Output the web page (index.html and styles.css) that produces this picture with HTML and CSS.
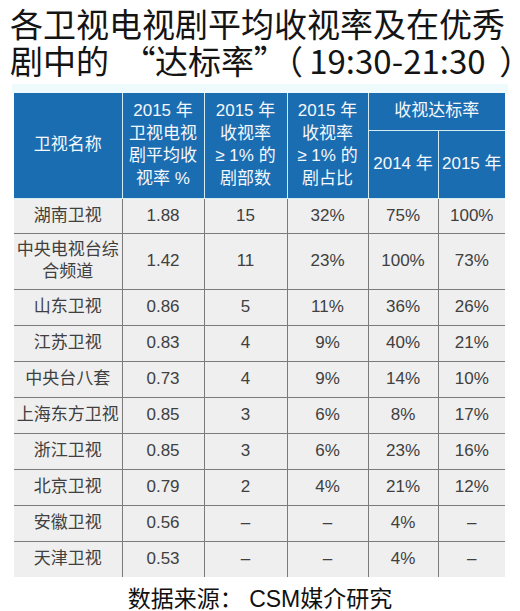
FILE: index.html
```html
<!DOCTYPE html>
<html lang="zh-CN">
<head>
    <meta charset="UTF-8">
    <meta name="viewport" content="width=device-width, initial-scale=1.0">
    <title>各卫视电视剧平均收视率及在优秀剧中的达标率</title>
    <link rel="stylesheet" href="styles.css">
</head>
<body>
    <h1 class="title">各卫视电视剧平均收视率及在优秀
剧中的    “达标率”  （ 19:30-21:30  ）</h1>

    <div class="band"></div>

    <table class="rates">
        <colgroup>
            <col class="c-name">
            <col class="c-avg">
            <col class="c-count">
            <col class="c-share">
            <col class="c-y14">
            <col class="c-y15">
        </colgroup>
        <thead>
            <tr class="head-top">
                <th rowspan="2">卫视名称</th>
                <th rowspan="2">2015 年<br>卫视电视<br>剧平均收<br>视率 %</th>
                <th rowspan="2">2015 年<br>收视率<br>≥ 1% 的<br>剧部数</th>
                <th rowspan="2">2015 年<br>收视率<br>≥ 1% 的<br>剧占比</th>
                <th colspan="2">收视达标率</th>
            </tr>
            <tr class="head-sub">
                <th>2014 年</th>
                <th>2015 年</th>
            </tr>
        </thead>
        <tbody>
            <tr class="first"><td>湖南卫视</td><td>1.88</td><td>15</td><td>32%</td><td>75%</td><td>100%</td></tr>
            <tr class="tall"><td>中央电视台综<br>合频道</td><td>1.42</td><td>11</td><td>23%</td><td>100%</td><td>73%</td></tr>
            <tr><td>山东卫视</td><td>0.86</td><td>5</td><td>11%</td><td>36%</td><td>26%</td></tr>
            <tr><td>江苏卫视</td><td>0.83</td><td>4</td><td>9%</td><td>40%</td><td>21%</td></tr>
            <tr><td>中央台八套</td><td>0.73</td><td>4</td><td>9%</td><td>14%</td><td>10%</td></tr>
            <tr><td>上海东方卫视</td><td>0.85</td><td>3</td><td>6%</td><td>8%</td><td>17%</td></tr>
            <tr><td>浙江卫视</td><td>0.85</td><td>3</td><td>6%</td><td>23%</td><td>16%</td></tr>
            <tr><td>北京卫视</td><td>0.79</td><td>2</td><td>4%</td><td>21%</td><td>12%</td></tr>
            <tr><td>安徽卫视</td><td>0.56</td><td>–</td><td>–</td><td>4%</td><td>–</td></tr>
            <tr><td>天津卫视</td><td>0.53</td><td>–</td><td>–</td><td>4%</td><td>–</td></tr>
        </tbody>
    </table>

    <p class="source">数据来源： CSM媒介研究</p>
</body>
</html>
```

FILE: styles.css
```css
body {
    margin: 0;
    background: #ffffff;
    font-family: "Liberation Sans", "Noto Sans CJK SC", sans-serif;
    color: #111;
}

/* two fixed lines, punctuation spaced like the poster */
.title {
    margin: 0;
    padding: 5px 0 0 10px;
    font-family: "Noto Sans CJK SC", sans-serif;
    font-size: 33px;
    font-weight: 400;
    line-height: 37px;
    color: #141414;
    white-space: pre;
    font-feature-settings: "palt";
}

.band {
    height: 9px;
    margin: 5px 12px 0 12px;
    background: #effafc;
}

.rates {
    width: 491px;
    margin-left: 14px;
    border-collapse: collapse;
    table-layout: fixed;
    font-size: 17px;
    text-align: center;
}

.c-name { width: 108px; }
.c-avg { width: 82px; }
.c-count { width: 83px; }
.c-share { width: 81px; }
.c-y14 { width: 70px; }
.c-y15 { width: 67px; }

.rates th {
    background: #1b6db2;
    color: #f4f8fc;
    font-weight: 400;
    line-height: 22.5px;
    padding: 0;
    border: 1px solid #d6ecf3;
}

.rates thead tr:first-child th {
    border-top: none;
}

.rates th:first-child {
    border-left: none;
}

.rates tr th:last-child {
    border-right: none;
}

.head-top {
    height: 37px;
}

.head-sub {
    height: 68px;
}

.rates td {
    background: #efefef;
    color: #404040;
    padding: 0;
    height: 35px;
    line-height: 22px;
    border: 1px solid #7b7b7b;
}

.rates tbody tr:first-child td {
    border-top: none;
}

.rates td:first-child {
    border-left: none;
}

.rates td:last-child {
    border-right: none;
}

.rates tbody tr:last-child td {
    border-bottom: none;
}

.rates .first td {
    height: 34px;
}

.rates .tall td {
    height: 55px;
}

.source {
    margin: 7px 0 0;
    text-align: center;
    font-size: 23px;
    line-height: 30px;
    color: #111;
}
```
